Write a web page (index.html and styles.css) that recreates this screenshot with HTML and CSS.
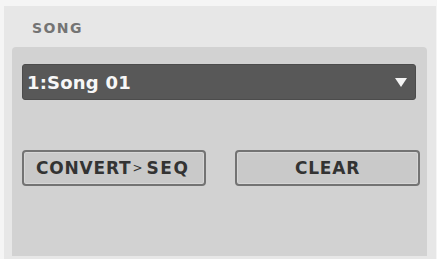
FILE: index.html
```html
<!DOCTYPE html>
<html>
<head>
<meta charset="utf-8">
<link rel="stylesheet" href="styles.css">
</head>
<body>
<div class="outer">
  <div class="label">SONG</div>
  <div class="inner">
    <div class="select">
      <span class="select-text">1:Song 01</span>
      <svg class="caret" width="12" height="9" viewBox="0 0 12 9"><polygon points="0,0 12,0 6,9" fill="#f4f4f4"/></svg>
    </div>
    <div class="buttons">
      <div class="btn btn-convert">CONVERT<span class="arrow">&gt;</span><span class="seq">SEQ</span></div>
      <div class="btn btn-clear">CLEAR</div>
    </div>
  </div>
</div>
</body>
</html>
```
FILE: styles.css
```css
html, body {
  margin: 0;
  padding: 0;
}
body {
  background: #f5f5f5;
  width: 437px;
  height: 259px;
  overflow: hidden;
  font-family: "DejaVu Sans", Verdana, sans-serif;
}
.outer {
  margin: 6px 1px 0 4px;
  height: 253px;
  background: #e7e7e7;
  box-sizing: border-box;
  padding: 12px 9px 0 8px;
  display: flex;
  flex-direction: column;
}
.label {
  font-size: 14px;
  font-weight: bold;
  letter-spacing: 1.4px;
  color: #747474;
  line-height: 18px;
  padding-left: 20px;
  padding-top: 1px;
  height: 28px;
}
.inner {
  background: #d2d2d2;
  border-radius: 4px 4px 0 0;
  height: 209px;
  box-sizing: border-box;
  padding: 17px 11px 0 10px;
  display: flex;
  flex-direction: column;
}
.select {
  height: 36px;
  background: #585858;
  border-radius: 3px;
  box-sizing: border-box;
  border: 1px solid #4c4c4c;
  display: flex;
  align-items: center;
  justify-content: space-between;
  padding: 0 8px 0 4px;
}
.select-text {
  color: #f7f7f7;
  font-size: 18px;
  font-weight: bold;
  letter-spacing: 0.2px;
  line-height: 20px;
  padding-top: 2px;
}
.caret {
  display: block;
}
.buttons {
  display: flex;
  margin-top: 50px;
  margin-right: -4px;
  gap: 29px;
}
.btn {
  height: 36px;
  box-sizing: border-box;
  border: 2px solid #737373;
  border-radius: 4px;
  background: #c9c9c9;
  box-shadow: inset 0 0 0 1px #d6d6d6;
  color: #333333;
  font-size: 17px;
  font-weight: bold;
  letter-spacing: 0.8px;
  display: flex;
  align-items: center;
  justify-content: center;
}
.btn-convert {
  width: 184px;
  justify-content: flex-start;
  padding-left: 12px;
}
.btn-clear {
  width: 185px;
}
.arrow {
  font-size: 12px;
  font-weight: normal;
  margin: 0 4px 0 1px;
  letter-spacing: 0;
}
.seq {
  letter-spacing: 1.6px;
}
```
